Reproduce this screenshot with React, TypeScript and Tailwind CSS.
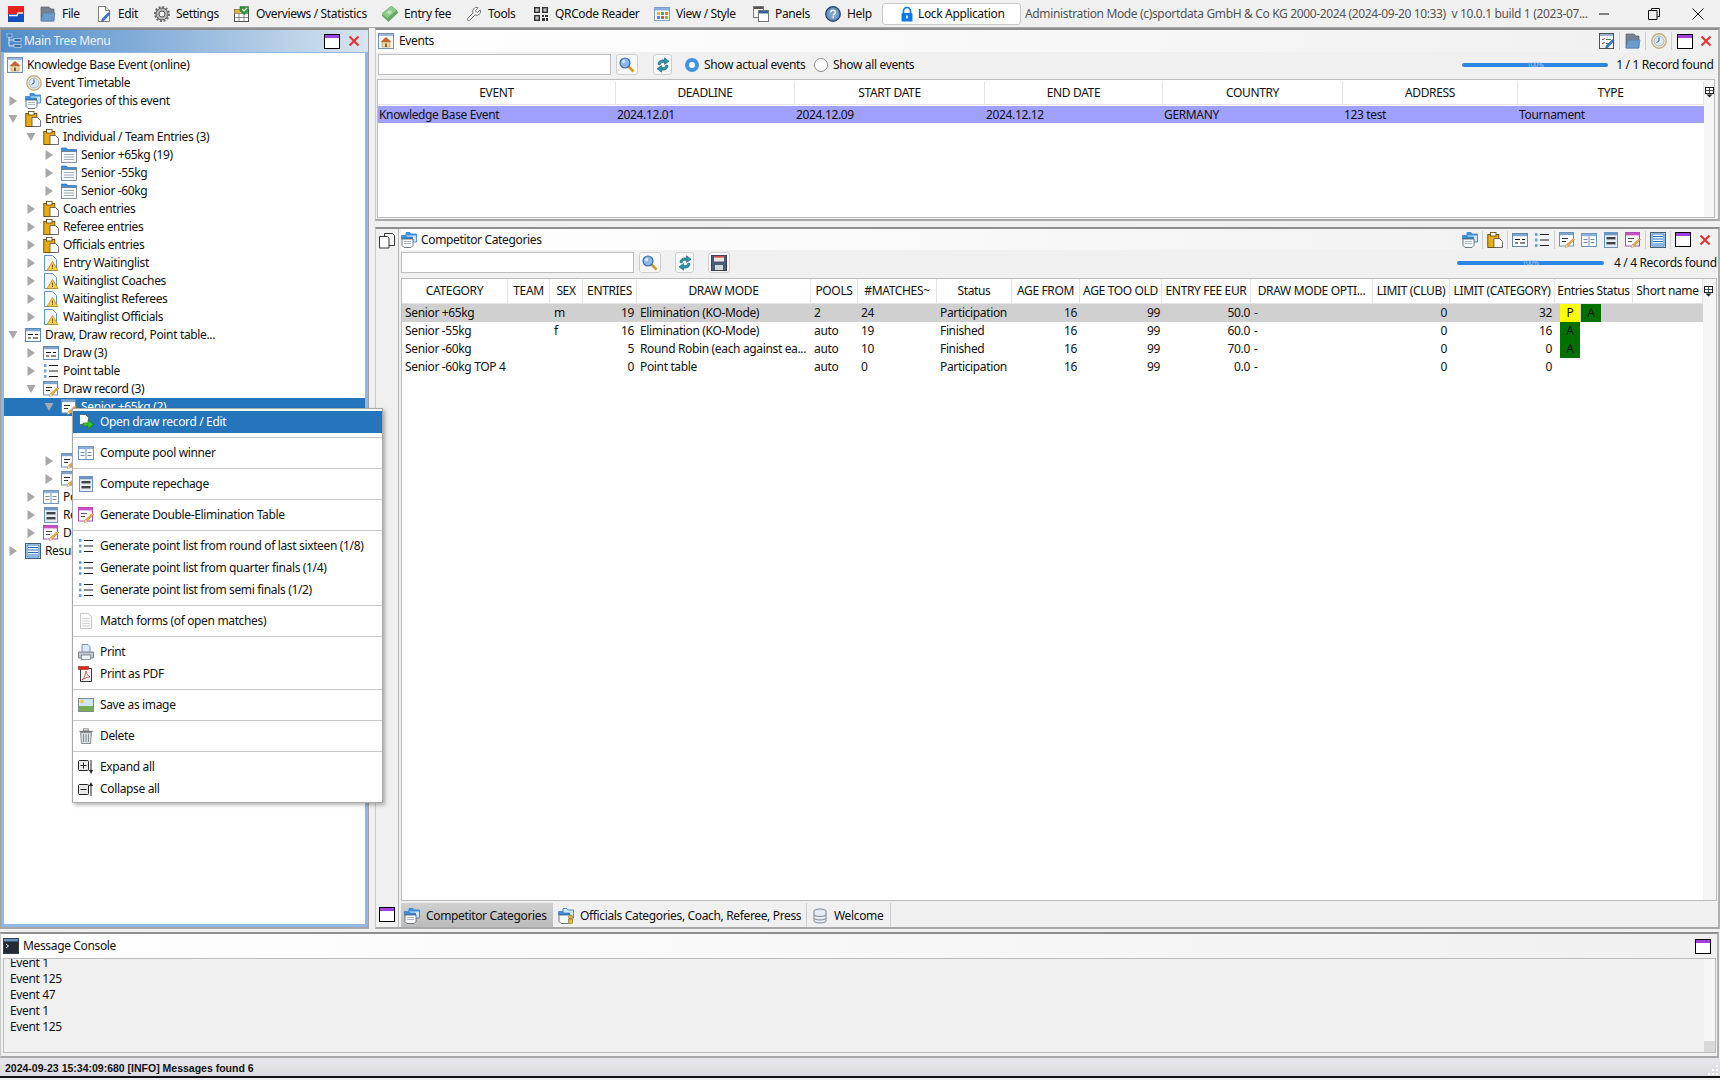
import React from 'react';
import { Wrench } from 'lucide-react';

function Ico({ children, className = 'w-4 h-4' }: { children: React.ReactNode; className?: string }) {
  return (
    <svg viewBox="0 0 16 16" className={`shrink-0 ${className}`}>
      {children}
    </svg>
  );
}

const Pencil = () => (
  <>
    <path d="M14.5 6.5l1 1-6.5 7-2.5 1 .8-2.7z" fill="#f0b040" stroke="#b87820" strokeWidth=".6" />
    <path d="M6.5 15.5l.8-2.7 1.7 1.7z" fill="#f6e0b0" />
  </>
);

const Logo = () => (
  <Ico>
    <rect x="0" y="0" width="16" height="8" fill="#e8221c" />
    <rect x="0" y="8" width="16" height="8" fill="#1450c4" />
    <path d="M1 9.5h8l1-2.5h5" stroke="#f2f2f2" strokeWidth="1.6" fill="none" />
  </Ico>
);
const FileIco = () => (
  <Ico>
    <path d="M1 1h8l2 2h3v12H1z" fill="#77828e" stroke="#56616c" strokeWidth=".7" />
    <path d="M1 15l2-8h12l-1.5 8z" fill="#6b9ccb" stroke="#4d7eb0" strokeWidth=".7" />
  </Ico>
);
const EditDoc = () => (
  <Ico>
    <path d="M2.5.5h7l4 4v11h-11z" fill="#fff" stroke="#606060" strokeWidth=".8" />
    <path d="M9.5.5v4h4" fill="#dedede" stroke="#606060" strokeWidth=".8" />
    <path d="M12.5 6.5l1.5 1.2-6 6.8-2.5.8.7-2.5z" fill="#3878d0" stroke="#204a90" strokeWidth=".5" />
  </Ico>
);
const CheckPencil = () => (
  <Ico>
    <rect x=".5" y=".5" width="14" height="15" fill="#fff" stroke="#505050" />
    <rect x="1" y="1" width="13" height="2" fill="#9ab4d0" />
    <path d="M3 6l1 1 1.5-2M3 10l1 1 1.5-2" stroke="#d03030" fill="none" />
    <path d="M7 6.5h5M7 10.5h3" stroke="#3a8a40" />
    <path d="M13.5 6.5l1.5 1.2-6 6.8-2.5.8.7-2.5z" fill="#3878d0" stroke="#204a90" strokeWidth=".5" />
  </Ico>
);
const Gear = () => (
  <Ico>
    <circle cx="8" cy="8" r="6" fill="#b8b8b8" stroke="#5a5a5a" strokeWidth="1" />
    <circle cx="8" cy="8" r="7" fill="none" stroke="#6a6a6a" strokeWidth="2" strokeDasharray="2 1.66" />
    <circle cx="8" cy="8" r="3" fill="#f0f0f0" stroke="#5a5a5a" strokeWidth="1" />
  </Ico>
);
const Overviews = () => (
  <Ico>
    <rect x=".5" y="3.5" width="14" height="12" fill="#fff" stroke="#505050" />
    <path d="M.5 7.5h14M.5 11.5h14M5 3.5v12M10 3.5v12" stroke="#606060" strokeWidth=".7" />
    <rect x=".5" y="3.5" width="5" height="4" fill="#e8b030" />
    <path d="M6 .5h8.5v5l-4.2 3-4.3-3z" fill="#2a9a38" stroke="#176a22" strokeWidth=".5" />
    <path d="M8 3l2 2 3-3" stroke="#fff" strokeWidth="1.2" fill="none" />
  </Ico>
);
const Money = () => (
  <Ico>
    <path d="M0 9.5L9.5.5 16 6.5 6.5 15.5z" fill="#6aab6a" stroke="#4a8c4c" strokeWidth=".6" />
    <path d="M0 7.5L9.5 0 15 4.5 5 12.5z" fill="#8ccc8c" stroke="#5a9c5c" strokeWidth=".5" />
    <circle cx="7.5" cy="6.2" r="2" fill="#bce4bc" />
  </Ico>
);
const Qr = () => (
  <Ico>
    <path
      fill="#333"
      d="M1 1h6v6H1zM2.5 2.5v3h3v-3zM3.5 3.5h1v1h-1zM9 1h6v6H9zM10.5 2.5v3h3v-3zM11.5 3.5h1v1h-1zM1 9h6v6H1zM2.5 10.5v3h3v-3zM3.5 11.5h1v1h-1zM9 9h2v2H9zM12 9h3v2h-3zM9 12h3v3H9zM13 12h2v3h-2z"
      fillRule="evenodd"
    />
  </Ico>
);
const ViewStyle = () => (
  <Ico>
    <rect x=".5" y="1.5" width="15" height="13" fill="#fff" stroke="#7a9cc8" />
    <rect x="1" y="2" width="14" height="2.5" fill="#8cb0dc" />
    <rect x="3" y="6" width="3" height="3" fill="#e8b030" />
    <rect x="7" y="6" width="3" height="3" fill="#58a858" />
    <rect x="11" y="6" width="3" height="3" fill="#e87830" />
    <rect x="3" y="10" width="3" height="3" fill="#4890d8" />
    <rect x="7" y="10" width="3" height="3" fill="#d85050" />
    <rect x="11" y="10" width="3" height="3" fill="#8cb840" />
  </Ico>
);
const Panels = () => (
  <Ico>
    <rect x=".5" y=".5" width="10" height="11" fill="#f4f4f4" stroke="#777" />
    <rect x="1" y="1" width="9" height="2" fill="#555" />
    <rect x="5.5" y="4.5" width="10" height="11" fill="#fff" stroke="#777" />
    <rect x="6" y="5" width="9" height="2.5" fill="#30609c" />
  </Ico>
);
const Help = () => (
  <Ico>
    <circle cx="8" cy="8" r="7.3" fill="#5c86b8" stroke="#23426c" strokeWidth="1.2" />
    <circle cx="8" cy="8" r="5.4" fill="#7ba2cf" />
    <path d="M5.8 6.2c.2-2.6 4.6-2.6 4.6 0 0 1.6-2.2 1.6-2.2 3.2" fill="none" stroke="#fff" strokeWidth="1.5" />
    <rect x="7.4" y="10.4" width="1.6" height="1.7" fill="#fff" />
  </Ico>
);
const Lock = () => (
  <Ico>
    <path d="M4.5 7.5V5a3.5 3.5 0 017 0v2.5" fill="none" stroke="#0a78e8" strokeWidth="1.7" />
    <rect x="2.5" y="7" width="11" height="8.5" rx="1" fill="#0a78e8" />
    <rect x="7.2" y="9.5" width="1.6" height="3" fill="#fff" />
  </Ico>
);
const TreeIco = () => (
  <Ico>
    <path d="M3 2v11M3 7h5M3 13h5" stroke="#dce8f4" fill="none" />
    <rect x="1" y="1" width="5" height="3" fill="#3a6ea8" stroke="#dce8f4" strokeWidth=".6" />
    <rect x="8" y="5.5" width="7" height="3" fill="#3a6ea8" stroke="#dce8f4" strokeWidth=".6" />
    <rect x="8" y="11.5" width="7" height="3" fill="#3a6ea8" stroke="#dce8f4" strokeWidth=".6" />
  </Ico>
);
const HomeWin = () => (
  <Ico>
    <rect x=".5" y=".5" width="15" height="15" fill="#f4f6f8" stroke="#6f90b4" />
    <rect x="1" y="1" width="14" height="2" fill="#9cb8d4" />
    <path d="M2.5 9L8 4l5.5 5z" fill="#c86030" />
    <rect x="4" y="9" width="8" height="5" fill="#f0d8a0" stroke="#a08040" strokeWidth=".5" />
    <rect x="7" y="10.5" width="2" height="3.5" fill="#806030" />
  </Ico>
);
const Clock = () => (
  <Ico>
    <circle cx="8" cy="8" r="7.2" fill="#f6f2e4" stroke="#c4ad7c" strokeWidth="1.4" />
    <circle cx="8" cy="8" r="5" fill="#dce8f6" stroke="#7c9cc4" strokeWidth=".7" />
    <path d="M8 4.5V8l-2.5 1.5" stroke="#35598c" fill="none" />
  </Ico>
);
const FolderDoc = () => (
  <Ico>
    <path d="M5 .5h4l1 1.5h5.5v8H5z" fill="#cfe4f8" stroke="#1e6cc0" strokeWidth=".7" />
    <path d="M5 .5h4l1 1.5h5.5v1.5H5z" fill="#3c8fe0" />
    <path d="M.5 3.5h4l1 1.5h6v2H.5z" fill="#3c8fe0" stroke="#1e6cc0" strokeWidth=".6" />
    <path d="M1 7h11v6.5l-2 2H3l-2-2z" fill="#f8fafc" stroke="#505a64" strokeWidth=".8" />
    <path d="M3 9.5h7M3 11.5h7" stroke="#9aa8b8" strokeWidth=".8" />
  </Ico>
);
const OfficialsFolder = () => (
  <Ico>
    <path d="M5 .5h4l1 1.5h5.5v8H5z" fill="#cfe4f8" stroke="#1e6cc0" strokeWidth=".7" />
    <path d="M.5 3.5h4l1 1.5h6v2H.5z" fill="#3c8fe0" stroke="#1e6cc0" strokeWidth=".6" />
    <path d="M1 7h11v6.5l-2 2H3l-2-2z" fill="#f8fafc" stroke="#505a64" strokeWidth=".8" />
    <circle cx="12.5" cy="9" r="2" fill="#e8b830" stroke="#7a5c10" strokeWidth=".5" />
    <rect x="10.5" y="11" width="4" height="4.5" fill="#e8b830" stroke="#7a5c10" strokeWidth=".5" />
  </Ico>
);
const Clipboard = () => (
  <Ico>
    <rect x=".8" y="2.5" width="11" height="13" fill="#e8ac10" stroke="#5c4408" strokeWidth=".9" />
    <rect x="3.5" y=".5" width="5.5" height="3.5" fill="#fff" stroke="#5c4408" strokeWidth=".8" />
    <path d="M7 6.5h5.5l3 3v6H7z" fill="#fff" stroke="#505050" strokeWidth=".8" />
  </Ico>
);
const FolderLines = () => (
  <Ico>
    <path d="M.5 1h5l1 1.5h9v3H.5z" fill="#3c8fe0" stroke="#1e5ca8" strokeWidth=".6" />
    <rect x=".5" y="4.5" width="15" height="11" fill="#f6f8fa" stroke="#6c7884" strokeWidth=".8" />
    <path d="M3 7.5h10M3 10h10M3 12.5h10" stroke="#98a4b0" strokeWidth=".9" />
  </Ico>
);
const WarnDoc = () => (
  <Ico>
    <path d="M1.5.5h8l4 4v11h-12z" fill="#f4f8fc" stroke="#5c94d0" />
    <path d="M9.5 6.5l5.5 9H4z" fill="#f6d040" stroke="#b08810" strokeWidth=".7" />
    <rect x="9.1" y="9.5" width=".9" height="3" fill="#604808" />
    <rect x="9.1" y="13" width=".9" height="1" fill="#604808" />
  </Ico>
);
const DrawWin = () => (
  <Ico>
    <rect x=".5" y="1.5" width="15" height="13" fill="#fff" stroke="#5c88b8" />
    <rect x="1" y="2" width="14" height="2.2" fill="#7ea4d0" />
    <path d="M3 7.5h5M10 7.5h3M3 11h3M8 11h5" stroke="#111" strokeWidth="1.2" />
  </Ico>
);
const NumList = () => (
  <Ico>
    <path d="M1 1h2.5v3H1zM1 6.5h2.5v3H1zM1 12h2.5v3H1z" fill="#6ca4e0" />
    <path d="M6 2.5h9M6 8h9M6 13.5h9" stroke="#222" strokeWidth="1" />
  </Ico>
);
const EditWin = () => (
  <Ico>
    <rect x=".5" y=".5" width="14" height="13.5" fill="#fff" stroke="#6a90b8" />
    <rect x="1" y="1" width="13" height="2.2" fill="#7ea4d0" />
    <path d="M3 6.5h6M3 9.5h4" stroke="#333" strokeWidth="1.2" />
    <Pencil />
  </Ico>
);
const Pool = () => (
  <Ico>
    <rect x=".5" y="1.5" width="15" height="13" fill="#fff" stroke="#6c94c4" />
    <rect x="1" y="2" width="14" height="2.2" fill="#8cb0dc" />
    <path d="M8 4v10" stroke="#6c94c4" />
    <path d="M2.5 7.5h4M2.5 10.5h4M9.5 7.5h4M9.5 10.5h4" stroke="#7a8898" strokeWidth="1.2" />
  </Ico>
);
const Repechage = () => (
  <Ico>
    <rect x="1.5" y=".5" width="13" height="15" fill="#e4ecf6" stroke="#6c94c4" />
    <rect x="2" y="1" width="12" height="2.2" fill="#6c94c4" />
    <rect x="3.5" y="5" width="9" height="2.4" fill="#444" />
    <rect x="3.5" y="10" width="9" height="2.4" fill="#444" />
  </Ico>
);
const DoubleWin = () => (
  <Ico>
    <rect x=".5" y=".5" width="14" height="13.5" fill="#fff" stroke="#b848b8" />
    <rect x="1" y="1" width="13" height="2.4" fill="#c850c8" />
    <path d="M3 6.5h6M3 9.5h4" stroke="#555" strokeWidth="1.2" />
    <Pencil />
  </Ico>
);
const ResultList = () => (
  <Ico>
    <rect x=".5" y=".5" width="15" height="15" fill="#fff" stroke="#456078" />
    <rect x="2" y="2" width="12" height="12" fill="#fff" stroke="#1c70c8" />
    <path d="M3 4.5h10M3 7h10M3 9.5h10M3 12h10" stroke="#1c70c8" strokeWidth="1.2" />
  </Ico>
);
const OpenArrow = () => (
  <Ico>
    <path d="M1.5.5h6l3 3v7h-9z" fill="#fff" stroke="#555" strokeWidth=".8" />
    <path d="M5 9h5V6l5.5 4.5L10 15v-3H5z" fill="#3cc030" stroke="#1c7810" strokeWidth=".7" />
  </Ico>
);
const DocGrey = () => (
  <Ico>
    <path d="M2.5.5h8l3 3v12h-11z" fill="#fafafa" stroke="#c8c8c8" />
    <path d="M4.5 5.5h7M4.5 8h7M4.5 10.5h7M4.5 13h7" stroke="#d0d0d0" />
  </Ico>
);
const Printer = () => (
  <Ico>
    <path d="M4 .5h6l2 2v6H4z" fill="#dce8f8" stroke="#5c7ca8" strokeWidth=".8" />
    <path d="M.5 8h15v6h-15z" fill="#c0c8d0" stroke="#5c6c7c" strokeWidth=".8" />
    <rect x="3.5" y="11" width="9" height="4.5" fill="#f4f4f4" stroke="#5c6c7c" strokeWidth=".7" />
  </Ico>
);
const Pdf = () => (
  <Ico>
    <path d="M2.5 2.5h11v13h-11z" fill="#f4f4f4" stroke="#222" strokeWidth=".9" />
    <rect x=".5" y=".5" width="10" height="3" fill="#e82818" stroke="#801008" strokeWidth=".5" />
    <path d="M4 14c3-3 3.5-6 4-9 .5 3 2 5 4 6-3 0-5 1-8 3z" fill="none" stroke="#a83028" strokeWidth=".7" />
  </Ico>
);
const ImageIco = () => (
  <Ico>
    <rect x=".5" y="1.5" width="15" height="13" fill="#cfe4f6" stroke="#7c8c8c" />
    <rect x="1" y="9" width="14" height="5" fill="#78ac50" />
    <rect x="2.5" y="3" width="3" height="3" fill="#f0c830" />
  </Ico>
);
const Trash = () => (
  <Ico>
    <path d="M1.5 3.5h13" stroke="#777" strokeWidth="1.4" />
    <rect x="5.5" y=".8" width="5" height="2" fill="#ddd" stroke="#777" strokeWidth=".7" />
    <path d="M2.5 4.5h11l-1 11h-9z" fill="#d8dde2" stroke="#777" strokeWidth=".8" />
    <path d="M5.5 6v8M8 6v8M10.5 6v8" stroke="#8a929a" />
  </Ico>
);
const ExpandAll = () => (
  <Ico>
    <rect x=".5" y="1.5" width="10" height="10" rx="1" fill="#e8e8e8" stroke="#222" />
    <path d="M2.5 6.5h6M5.5 3.5v6" stroke="#222" />
    <path d="M13 1v11" stroke="#222" />
    <path d="M11 11h4l-2 4z" fill="#222" />
  </Ico>
);
const CollapseAll = () => (
  <Ico>
    <rect x=".5" y="3.5" width="10" height="10" rx="1" fill="#e8e8e8" stroke="#222" />
    <path d="M2.5 8.5h6" stroke="#222" />
    <path d="M13 4v11" stroke="#222" />
    <path d="M11 5h4l-2-4z" fill="#222" />
  </Ico>
);
const Search = () => (
  <Ico>
    <path d="M9.5 9.5l5 5" stroke="#d89820" strokeWidth="2.6" />
    <circle cx="6" cy="6" r="5" fill="#8cb8e8" stroke="#3c6cac" strokeWidth="1.2" />
    <circle cx="4.6" cy="4.6" r="1.6" fill="#dcecfa" />
  </Ico>
);
const Floppy = () => (
  <Ico>
    <rect x=".5" y=".5" width="15" height="15" fill="#4a5c74" stroke="#3a4658" />
    <rect x="3" y="1" width="10" height="5.5" fill="#f0e0dc" />
    <rect x="3" y="1" width="10" height="1.6" fill="#c85048" />
    <rect x="4" y="10" width="8" height="5" fill="#d4d8dc" />
  </Ico>
);
const Refresh = () => (
  <Ico>
    <path d="M3 7.5C3 4 6 2.5 9.5 3V.8L14 4.2 9.5 7.4V5.4C7.3 5 5.5 5.6 5 8z" fill="#2c93a8" stroke="#155a70" strokeWidth=".6" />
    <path d="M13 8.5c0 3.5-3 5-6.5 4.5v2.2L2 11.8l4.5-3.2v2c2.2.4 4-.2 4.5-2.6z" fill="#2c93a8" stroke="#155a70" strokeWidth=".6" />
  </Ico>
);
const GutterWindows = () => (
  <Ico>
    <path d="M5.5.5h8l2 2v10h-10z" fill="#f4f4f4" stroke="#222" strokeWidth=".9" />
    <path d="M.5 3.5h8l1.5 1.5v10H.5z" fill="#fff" stroke="#222" strokeWidth=".9" />
  </Ico>
);
const Disc = () => (
  <Ico>
    <ellipse cx="8" cy="3" rx="6" ry="2" fill="#dde4ec" stroke="#7a8a9a" />
    <path d="M2 3v10c0 2.6 12 2.6 12 0V3" fill="#e8ecf0" stroke="#7a8a9a" />
    <path d="M2 6.5c0 2.6 12 2.6 12 0M2 10c0 2.6 12 2.6 12 0" fill="none" stroke="#7a8a9a" />
  </Ico>
);
const ConsoleIco = () => (
  <Ico>
    <rect x=".5" y=".5" width="15" height="15" fill="#222a34" stroke="#30404c" />
    <rect x="1" y="1" width="14" height="2.4" fill="#6c94c0" />
    <path d="M3 6l2.5 2L3 10" stroke="#fff" fill="none" />
  </Ico>
);

function RestoreBtn() {
  return (
    <div className="w-[16px] h-[15px] border-[1.5px] border-black bg-white shrink-0">
      <div className="h-[3px] bg-[#a040e0]" />
    </div>
  );
}

function CloseX() {
  return (
    <svg viewBox="0 0 12 12" className="w-[12px] h-[12px] shrink-0">
      <path d="M1.5 1.5l9 9M10.5 1.5l-9 9" stroke="#e83030" strokeWidth="2" />
    </svg>
  );
}

function ColumnChooser() {
  return (
    <svg viewBox="0 0 9 11" className="w-[9px] h-[11px]">
      <rect x=".5" y=".5" width="8" height="6" fill="#fff" stroke="#222" />
      <path d="M.5 3.5h8M4.5 .5v6" stroke="#222" strokeWidth=".8" />
      <path d="M1.5 7.5h6l-3 3z" fill="#222" />
    </svg>
  );
}

const menuBar: { w: string; icon: React.ReactNode; label: string }[] = [
  { w: 'w-[56px]', icon: <FileIco />, label: 'File' },
  { w: 'w-[58px]', icon: <EditDoc />, label: 'Edit' },
  { w: 'w-[80px]', icon: <Gear />, label: 'Settings' },
  { w: 'w-[148px]', icon: <Overviews />, label: 'Overviews / Statistics' },
  { w: 'w-[84px]', icon: <Money />, label: 'Entry fee' },
  { w: 'w-[67px]', icon: <Wrench className="w-4 h-4 text-[#777] shrink-0" strokeWidth={1.5} />, label: 'Tools' },
  { w: 'w-[121px]', icon: <Qr />, label: 'QRCode Reader' },
  { w: 'w-[99px]', icon: <ViewStyle />, label: 'View / Style' },
  { w: 'w-[72px]', icon: <Panels />, label: 'Panels' },
  { w: 'w-[57px]', icon: <Help />, label: 'Help' },
];

type TreeRow = {
  level: 0 | 1 | 2;
  arrow?: 'open' | 'closed';
  icon?: React.ReactNode;
  label: string;
  selected?: boolean;
};

const treeRows: TreeRow[] = [
  { level: 0, arrow: 'closed', icon: <FolderDoc />, label: 'Categories of this event' },
  { level: 0, arrow: 'open', icon: <Clipboard />, label: 'Entries' },
  { level: 1, arrow: 'open', icon: <Clipboard />, label: 'Individual / Team Entries (3)' },
  { level: 2, arrow: 'closed', icon: <FolderLines />, label: 'Senior +65kg (19)' },
  { level: 2, arrow: 'closed', icon: <FolderLines />, label: 'Senior -55kg' },
  { level: 2, arrow: 'closed', icon: <FolderLines />, label: 'Senior -60kg' },
  { level: 1, arrow: 'closed', icon: <Clipboard />, label: 'Coach entries' },
  { level: 1, arrow: 'closed', icon: <Clipboard />, label: 'Referee entries' },
  { level: 1, arrow: 'closed', icon: <Clipboard />, label: 'Officials entries' },
  { level: 1, arrow: 'closed', icon: <WarnDoc />, label: 'Entry Waitinglist' },
  { level: 1, arrow: 'closed', icon: <WarnDoc />, label: 'Waitinglist Coaches' },
  { level: 1, arrow: 'closed', icon: <WarnDoc />, label: 'Waitinglist Referees' },
  { level: 1, arrow: 'closed', icon: <WarnDoc />, label: 'Waitinglist Officials' },
  { level: 0, arrow: 'open', icon: <DrawWin />, label: 'Draw, Draw record, Point table...' },
  { level: 1, arrow: 'closed', icon: <DrawWin />, label: 'Draw (3)' },
  { level: 1, arrow: 'closed', icon: <NumList />, label: 'Point table' },
  { level: 1, arrow: 'open', icon: <EditWin />, label: 'Draw record (3)' },
  { level: 2, arrow: 'open', icon: <EditWin />, label: 'Senior +65kg (2)', selected: true },
  { level: 2, label: '' },
  { level: 2, label: '' },
  { level: 2, arrow: 'closed', icon: <EditWin />, label: 'Senior -55kg' },
  { level: 2, arrow: 'closed', icon: <EditWin />, label: 'Senior -60kg' },
  { level: 1, arrow: 'closed', icon: <Pool />, label: 'Pool winner' },
  { level: 1, arrow: 'closed', icon: <Repechage />, label: 'Repechage' },
  { level: 1, arrow: 'closed', icon: <DoubleWin />, label: 'Double-Elimination' },
  { level: 0, arrow: 'closed', icon: <ResultList />, label: 'Results' },
];

const indent = ['pl-[4px]', 'pl-[22px]', 'pl-[40px]'];

function Arrow({ dir }: { dir: 'open' | 'closed' }) {
  return (
    <svg viewBox="0 0 10 10" className="w-[10px] h-[10px] shrink-0">
      <path d={dir === 'open' ? 'M.5 1h9L5 9z' : 'M1.5 0v10L9 5z'} fill="#a8a8a8" />
    </svg>
  );
}

function Row({ row }: { row: TreeRow }) {
  return (
    <div
      className={`flex items-center h-[18px] ${indent[row.level]} ${row.selected ? 'bg-[#2575bd] text-white' : ''}`}
    >
      {row.label && row.arrow ? (
        <>
          <span className="mr-[7px] flex">
            <Arrow dir={row.arrow} />
          </span>
          {row.icon}
          <span className="ml-[4px] whitespace-nowrap">{row.label}</span>
        </>
      ) : null}
    </div>
  );
}

const contextMenu: { icon: React.ReactNode; label: string; active?: boolean }[][] = [
  [{ icon: <OpenArrow />, label: 'Open draw record / Edit', active: true }],
  [{ icon: <Pool />, label: 'Compute pool winner' }],
  [{ icon: <Repechage />, label: 'Compute repechage' }],
  [{ icon: <DoubleWin />, label: 'Generate Double-Elimination Table' }],
  [
    { icon: <NumList />, label: 'Generate point list from round of last sixteen (1/8)' },
    { icon: <NumList />, label: 'Generate point list from quarter finals (1/4)' },
    { icon: <NumList />, label: 'Generate point list from semi finals (1/2)' },
  ],
  [{ icon: <DocGrey />, label: 'Match forms (of open matches)' }],
  [
    { icon: <Printer />, label: 'Print' },
    { icon: <Pdf />, label: 'Print as PDF' },
  ],
  [{ icon: <ImageIco />, label: 'Save as image' }],
  [{ icon: <Trash />, label: 'Delete' }],
  [
    { icon: <ExpandAll />, label: 'Expand all' },
    { icon: <CollapseAll />, label: 'Collapse all' },
  ],
];

function ContextMenu() {
  return (
    <div className="absolute left-[72px] top-[408px] w-[311px] bg-white border border-[#a8a8a8] py-[2px] shadow-[2px_2px_4px_rgba(0,0,0,0.3)]">
      {contextMenu.map((group, i) => (
        <div key={i}>
          {i > 0 && (
            <div className="h-[9px] flex items-center">
              <div className="h-[1px] w-full bg-[#c8c8c8]" />
            </div>
          )}
          {group.map((item) => (
            <div
              key={item.label}
              className={`flex items-center h-[22px] pl-[5px] ${item.active ? 'bg-[#2575bd] text-white' : ''}`}
            >
              {item.icon}
              <span className="ml-[6px] whitespace-nowrap">{item.label}</span>
            </div>
          ))}
        </div>
      ))}
    </div>
  );
}

type Col = { w: string; title: string; pad?: string };

const eventCols: Col[] = [
  { w: 'w-[238px]', title: 'EVENT' },
  { w: 'w-[179px]', title: 'DEADLINE' },
  { w: 'w-[190px]', title: 'START DATE' },
  { w: 'w-[178px]', title: 'END DATE' },
  { w: 'w-[180px]', title: 'COUNTRY' },
  { w: 'w-[175px]', title: 'ADDRESS' },
  { w: 'w-[186px]', title: 'TYPE' },
];

const catCols: Col[] = [
  { w: 'w-[106px]', title: 'CATEGORY', pad: 'pl-[3px]' },
  { w: 'w-[42px]', title: 'TEAM', pad: 'pl-[3px]' },
  { w: 'w-[33px]', title: 'SEX', pad: 'pl-[4px]' },
  { w: 'w-[54px]', title: 'ENTRIES', pad: 'text-right pr-[3px]' },
  { w: 'w-[174px]', title: 'DRAW MODE', pad: 'pl-[3px]' },
  { w: 'w-[47px]', title: 'POOLS', pad: 'pl-[3px]' },
  { w: 'w-[79px]', title: '#MATCHES~', pad: 'pl-[3px]' },
  { w: 'w-[75px]', title: 'Status', pad: 'pl-[3px]' },
  { w: 'w-[68px]', title: 'AGE FROM', pad: 'text-right pr-[3px]' },
  { w: 'w-[82px]', title: 'AGE TOO OLD', pad: 'text-right pr-[2px]' },
  { w: 'w-[89px]', title: 'ENTRY FEE EUR', pad: 'text-right pr-[1px]' },
  { w: 'w-[122px]', title: 'DRAW MODE OPTI...', pad: 'pl-[3px]' },
  { w: 'w-[77px]', title: 'LIMIT (CLUB)', pad: 'text-right pr-[3px]' },
  { w: 'w-[105px]', title: 'LIMIT (CATEGORY)', pad: 'text-right pr-[3px]' },
  { w: 'w-[78px]', title: 'Entries Status' },
  { w: 'w-[70px]', title: 'Short name' },
];

const catRows: { cells: string[]; chips: string[] }[] = [
  {
    cells: ['Senior +65kg', '', 'm', '19', 'Elimination (KO-Mode)', '2', '24', 'Participation', '16', '99', '50.0', '-', '0', '32'],
    chips: ['P', 'A'],
  },
  {
    cells: ['Senior -55kg', '', 'f', '16', 'Elimination (KO-Mode)', 'auto', '19', 'Finished', '16', '99', '60.0', '-', '0', '16'],
    chips: ['A'],
  },
  {
    cells: ['Senior -60kg', '', '', '5', 'Round Robin (each against ea...', 'auto', '10', 'Finished', '16', '99', '70.0', '-', '0', '0'],
    chips: ['A'],
  },
  {
    cells: ['Senior -60kg TOP 4', '', '', '0', 'Point table', 'auto', '0', 'Participation', '16', '99', '0.0', '-', '0', '0'],
    chips: [],
  },
];

function Header({ cols, className = '' }: { cols: Col[]; className?: string }) {
  return (
    <div className={`flex h-[25px] bg-white border-b border-[#e4e4e4] ${className}`}>
      {cols.map((c) => (
        <div
          key={c.title}
          className={`${c.w} shrink-0 flex items-center justify-center border-r border-[#e4e4e4] whitespace-nowrap overflow-hidden`}
        >
          {c.title}
        </div>
      ))}
    </div>
  );
}

function Panel({ className = '', children }: { className?: string; children: React.ReactNode }) {
  return (
    <div
      className={`bg-[#f0f0f0] border-t-2 border-t-[#8e8e8e] border-r-2 border-r-[#b0b0b0] border-b-2 border-b-[#a8a8a8] border-l border-l-[#c8c8c8] ${className}`}
    >
      {children}
    </div>
  );
}

function ToolBtn({ className, children }: { className: string; children: React.ReactNode }) {
  return (
    <div
      className={`h-[21px] flex items-center justify-center border border-[#cfcfcf] rounded-[3px] bg-[#f8f8f8] shrink-0 ${className}`}
    >
      {children}
    </div>
  );
}

function Radio({ on }: { on?: boolean }) {
  return on ? (
    <span className="w-[14px] h-[14px] rounded-full bg-[#3f92e4] flex items-center justify-center shrink-0">
      <span className="w-[6px] h-[6px] rounded-full bg-white" />
    </span>
  ) : (
    <span className="w-[14px] h-[14px] rounded-full border border-[#8a8a8a] bg-white shrink-0" />
  );
}

function Progress({ className }: { className: string }) {
  return (
    <div className={`relative h-[4px] rounded-[2px] bg-[#2c86e0] shrink-0 ${className}`}>
      <span className="absolute inset-x-0 -top-[2px] text-center text-[7px] leading-[8px] text-[#a9c8ea]">100%</span>
    </div>
  );
}

const Sep = ({ className = '' }: { className?: string }) => (
  <div className={`w-px h-[18px] bg-[#cfcfcf] shrink-0 ${className}`} />
);

export default function App() {
  return (
    <div
      className="relative w-[1720px] h-[1080px] overflow-hidden bg-[#f0f0f0] text-[#111] text-[12px] leading-[16px]"
      style={{ fontFamily: '"Noto Sans", sans-serif', letterSpacing: '-0.35px' }}
    >
      {/* title / menu bar */}
      <div className="h-[28px] flex items-center pl-[8px] border-b border-[#a8a8a8]">
        <div className="w-[32px] shrink-0">
          <Logo />
        </div>
        {menuBar.map((m) => (
          <div key={m.label} className={`${m.w} shrink-0 flex items-center gap-[6px]`}>
            {m.icon}
            <span className="whitespace-nowrap">{m.label}</span>
          </div>
        ))}
        <div className="w-[139px] h-[22px] shrink-0 rounded-[3px] border border-[#c8c8c8] bg-white flex items-center pl-[16px] gap-[3px]">
          <Lock />
          <span>Lock Application</span>
        </div>
        <span className="ml-[4px] w-[565px] whitespace-pre overflow-hidden text-[#555]">
          Administration Mode (c)sportdata GmbH &amp; Co KG 2000-2024 (2024-09-20 10:33)  v 10.0.1 build 1 (2023-07...
        </span>
        <svg viewBox="0 0 14 12" className="w-[14px] h-[12px] ml-[8px]">
          <path d="M1 6h10" stroke="#111" />
        </svg>
        <svg viewBox="0 0 12 12" className="w-[12px] h-[12px] ml-[36px]">
          <path d="M3.5 2.5v-2h8v8h-2M.5 2.5h8.5v9H.5z" fill="none" stroke="#111" />
        </svg>
        <svg viewBox="0 0 12 12" className="w-[12px] h-[12px] ml-[32px]">
          <path d="M.5.5l11 11M11.5.5l-11 11" stroke="#111" />
        </svg>
      </div>

      {/* main area */}
      <div className="h-[904px] flex pb-[3px]">
        {/* tree panel */}
        <div className="w-[369px] shrink-0 border-t-2 border-t-[#8e8e8e] border-l border-l-[#a0a0a0] border-r border-r-[#a0a0a0] border-b-2 border-b-[#a8a8a8] flex flex-col">
          <div className="h-[22px] flex items-center bg-gradient-to-r from-[#4e8cca] to-[#d8e4ee] pl-[5px] pr-[8px]">
            <TreeIco />
            <span className="ml-[2px] text-[#eaf2fa]">Main Tree Menu</span>
            <span className="ml-auto">
              <RestoreBtn />
            </span>
            <span className="ml-[8px]">
              <CloseX />
            </span>
          </div>
          <div className="flex-1 bg-white border-[3px] border-t-[1px] border-[#90b8e2] overflow-hidden pt-[3px]">
            <div className="flex items-center h-[18px] pl-[3px]">
              <HomeWin />
              <span className="ml-[4px] whitespace-nowrap">Knowledge Base Event (online)</span>
            </div>
            <div className="flex items-center h-[18px] pl-[22px]">
              <Clock />
              <span className="ml-[3px]">Event Timetable</span>
            </div>
            {treeRows.map((r, i) => (
              <Row key={i} row={r} />
            ))}
          </div>
        </div>

        {/* right column */}
        <div className="flex-1 flex flex-col ml-[6px] mr-[1px] gap-[6px]">
          <Panel className="h-[193px] flex flex-col">
            <div className="h-[22px] flex items-center bg-gradient-to-r from-white to-[#f0f0f0] pl-[2px] pr-[6px]">
              <HomeWin />
              <span className="ml-[5px]">Events</span>
              <div className="ml-auto flex items-center gap-[4.5px]">
                <CheckPencil />
                <Sep />
                <FileIco />
                <Sep />
                <Clock />
                <Sep />
                <RestoreBtn />
                <span className="ml-[3px] flex">
                  <CloseX />
                </span>
              </div>
            </div>
            <div className="h-[27px] flex items-start pt-[2px] pl-[2px]">
              <div className="w-[233px] h-[21px] bg-white border border-[#bdbdbd] shrink-0" />
              <ToolBtn className="w-[22px] ml-[5px]">
                <Search />
              </ToolBtn>
              <ToolBtn className="w-[19px] ml-[15px]">
                <Refresh />
              </ToolBtn>
              <div className="h-[21px] flex items-center">
                <span className="ml-[13px] flex">
                  <Radio on />
                </span>
                <span className="ml-[5px] w-[110px] whitespace-nowrap">Show actual events</span>
                <Radio />
                <span className="ml-[5px] whitespace-nowrap">Show all events</span>
                <Progress className="w-[146px] ml-[548px]" />
                <span className="ml-[8px] whitespace-nowrap">1 / 1 Record found</span>
              </div>
            </div>
            <div className="flex-1 ml-[1px] mr-[3px] mb-[1px] border border-[#bcbcbc] bg-white flex overflow-hidden">
              <div className="w-[1326px] shrink-0">
                <Header cols={eventCols} className="pt-[2px]" />
                <div className="flex h-[17px] mt-[1px] items-center bg-[#a0a0ff]">
                  {['Knowledge Base Event', '2024.12.01', '2024.12.09', '2024.12.12', 'GERMANY', '123 test', 'Tournament'].map(
                    (t, i) => (
                      <div key={t} className={`${eventCols[i].w} shrink-0 pl-[1px] whitespace-nowrap`}>
                        {t}
                      </div>
                    ),
                  )}
                </div>
              </div>
              <div className="flex-1 bg-[#f6f6f6] pt-[7px] pl-[1px]">
                <ColumnChooser />
              </div>
            </div>
          </Panel>

          <Panel className="flex-1 flex">
            <div className="w-[23px] shrink-0 border-r border-[#b8b8b8] flex flex-col items-center justify-between pt-[4px] pb-[5px]">
              <GutterWindows />
              <RestoreBtn />
            </div>
            <div className="flex-1 flex flex-col min-w-0 pl-[2px]">
              <div className="h-[21px] flex items-center bg-gradient-to-r from-white to-[#f0f0f0] pr-[7px]">
                <FolderDoc />
                <span className="ml-[4px]">Competitor Categories</span>
                <div className="ml-auto flex items-center">
                  <FolderDoc />
                  <Sep className="ml-[4px]" />
                  <span className="ml-[4px] flex">
                    <Clipboard />
                  </span>
                  <Sep className="ml-[4px]" />
                  <span className="ml-[4px] flex">
                    <DrawWin />
                  </span>
                  <span className="ml-[6px] flex">
                    <NumList />
                  </span>
                  <Sep className="ml-[4px]" />
                  <span className="ml-[4px] flex">
                    <EditWin />
                  </span>
                  <span className="ml-[6px] flex">
                    <Pool />
                  </span>
                  <span className="ml-[6px] flex">
                    <Repechage />
                  </span>
                  <span className="ml-[6px] flex">
                    <DoubleWin />
                  </span>
                  <Sep className="ml-[4px]" />
                  <span className="ml-[4px] flex">
                    <ResultList />
                  </span>
                  <Sep className="ml-[4px]" />
                  <span className="ml-[4px] flex">
                    <RestoreBtn />
                  </span>
                  <span className="ml-[8px] flex">
                    <CloseX />
                  </span>
                </div>
              </div>
              <div className="h-[28px] flex items-start pt-[2px]">
                <div className="w-[233px] h-[21px] bg-white border border-[#bdbdbd] shrink-0" />
                <ToolBtn className="w-[22px] ml-[5px]">
                  <Search />
                </ToolBtn>
                <ToolBtn className="w-[19px] ml-[14px]">
                  <Refresh />
                </ToolBtn>
                <ToolBtn className="w-[22px] ml-[14px]">
                  <Floppy />
                </ToolBtn>
                <div className="h-[21px] flex items-center">
                  <Progress className="w-[147px] ml-[727px]" />
                  <span className="ml-[10px] whitespace-nowrap">4 / 4 Records found</span>
                </div>
              </div>
              <div className="flex-1 border border-[#bcbcbc] bg-white flex overflow-hidden mr-[1px]">
                <div className="w-[1301px] shrink-0">
                  <Header cols={catCols} />
                  <div>
                    {catRows.map((r, i) => (
                      <div key={i} className={`flex h-[18px] items-center ${i === 0 ? 'bg-[#d0d0d0]' : ''}`}>
                        {r.cells.map((t, j) => (
                          <div
                            key={j}
                            className={`${catCols[j].w} ${catCols[j].pad} shrink-0 whitespace-nowrap overflow-hidden`}
                          >
                            {t}
                          </div>
                        ))}
                        <div className="flex h-[18px] pl-[5px] gap-[1px] w-[78px] shrink-0">
                          {r.chips.map((c) => (
                            <span
                              key={c}
                              className={`w-[20px] h-[18px] flex items-center justify-center ${
                                c === 'P' ? 'bg-[#ffff00]' : 'bg-[#007000]'
                              }`}
                            >
                              {c}
                            </span>
                          ))}
                        </div>
                      </div>
                    ))}
                  </div>
                </div>
                <div className="flex-1 bg-[#f5f5f5] pt-[7px] pl-[1px]">
                  <ColumnChooser />
                </div>
              </div>
              <div className="h-[24px] flex items-stretch mt-[2px]">
                <div className="w-[152px] flex items-center pl-[3px] pt-[2px] bg-gradient-to-b from-[#d0d0d0] to-[#bcbcbc]">
                  <FolderDoc />
                  <span className="ml-[6px] whitespace-nowrap">Competitor Categories</span>
                </div>
                <div className="w-[254px] flex items-center pl-[5px] pt-[2px] border-r border-[#cfcfcf]">
                  <OfficialsFolder />
                  <span className="ml-[6px] whitespace-nowrap">Officials Categories, Coach, Referee, Press</span>
                </div>
                <div className="w-[84px] flex items-center pl-[5px] pt-[2px] border-r border-[#cfcfcf]">
                  <Disc />
                  <span className="ml-[6px]">Welcome</span>
                </div>
              </div>
            </div>
          </Panel>
        </div>
      </div>

      {/* message console */}
      <Panel className="h-[126px] flex flex-col ml-0 mr-[1px]">
        <div className="h-[24px] flex items-center bg-gradient-to-r from-white to-[#f0f0f0] pl-[2px] pr-[6px]">
          <ConsoleIco />
          <span className="ml-[4px]">Message Console</span>
          <span className="ml-auto">
            <RestoreBtn />
          </span>
        </div>
        <div className="h-[95px] ml-[2px] mr-[1px] border border-[#bcbcbc] flex overflow-hidden">
          <div className="flex-1 overflow-hidden pl-[6px]">
            <div className="-mt-[4px] leading-[16px]">
              <div>Event 1</div>
              <div>Event 125</div>
              <div>Event 47</div>
              <div>Event 1</div>
              <div>Event 125</div>
            </div>
          </div>
          <div className="w-[11px] bg-[#f5f5f5] flex flex-col justify-end">
            <div className="h-[11px] bg-[#d8d8d8]" />
          </div>
        </div>
      </Panel>

      {/* status bar */}
      <div
        className="relative h-[20px] flex items-center pl-[5px] pt-[2px] bg-gradient-to-b from-[#e8e8ec] to-[#dadae0] border-b-2 border-b-[#111] text-[10.5px] font-bold"
        style={{ fontFamily: '"Liberation Sans", sans-serif', letterSpacing: 0 }}
      >
        2024-09-23 15:34:09:680 [INFO] Messages found 6
        <svg viewBox="0 0 12 12" className="absolute right-[1px] bottom-0 w-[12px] h-[12px]">
          <path d="M9 1h2v2H9zM5 5h2v2H5zM9 5h2v2H9zM1 9h2v2H1zM5 9h2v2H5zM9 9h2v2H9z" fill="#fff" />
        </svg>
      </div>

      <ContextMenu />
    </div>
  );
}
